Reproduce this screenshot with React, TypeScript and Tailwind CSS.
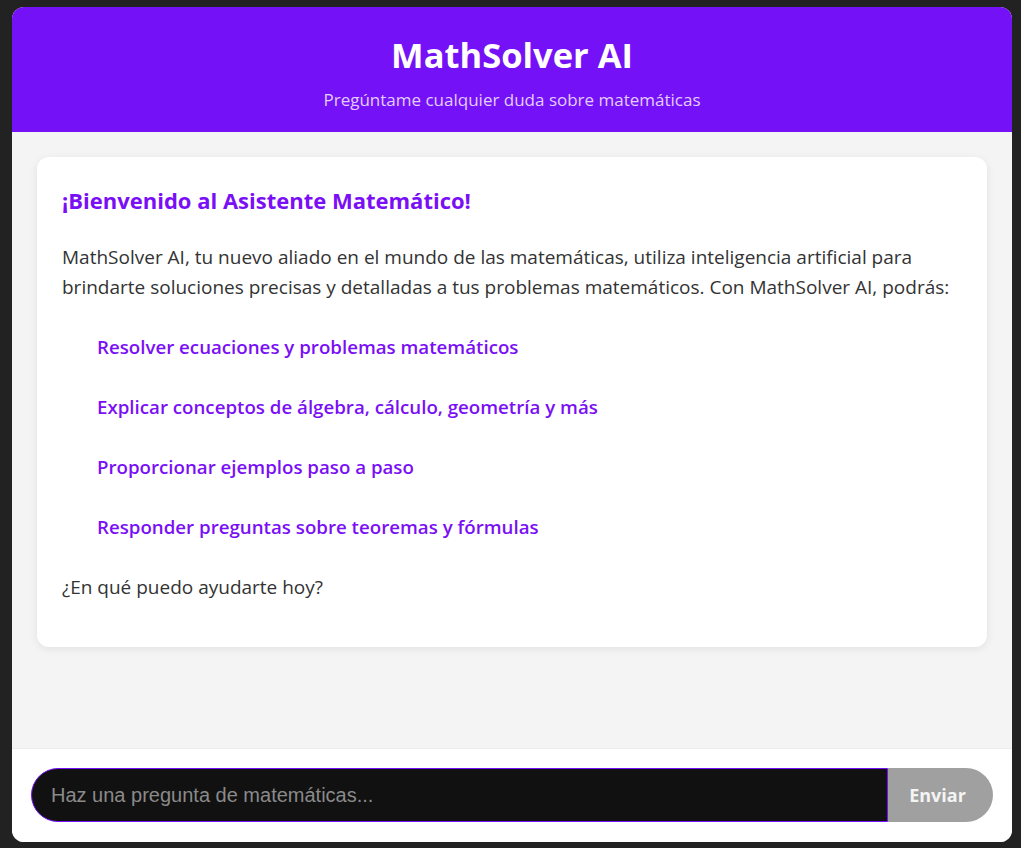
const features = [
  "Resolver ecuaciones y problemas matemáticos",
  "Explicar conceptos de álgebra, cálculo, geometría y más",
  "Proporcionar ejemplos paso a paso",
  "Responder preguntas sobre teoremas y fórmulas",
];

export default function App() {
  return (
    <div className="min-h-screen bg-[#222222] pt-[7px] pl-[12px] font-['Segoe_UI','Open_Sans',sans-serif]">
      <div className="w-[1000px] h-[835px] bg-white rounded-[12px] overflow-hidden flex flex-col">
        {/* Header */}
        <header className="bg-[#7511f6] text-center h-[125px] pt-[24px]">
          <h1 className="text-[34.5px] leading-[48px] font-bold text-white">MathSolver AI</h1>
          <p className="mt-[10px] text-[17px] leading-[22px] text-[#e2cdff]">
            Pregúntame cualquier duda sobre matemáticas
          </p>
        </header>

        {/* Chat area */}
        <main className="flex-1 bg-[#f4f4f4] px-[25px] pt-[25px]">
          <div className="bg-white rounded-[12px] shadow-[0_2px_8px_rgba(0,0,0,0.08)] px-[25px] pt-[28px] pb-[45px] text-[#333333]">
            <h2 className="text-[22px] leading-[30px] font-bold text-[#7a0ff6]">
              ¡Bienvenido al Asistente Matemático!
            </h2>
            <p className="mt-[27px] text-[19px] leading-[30px]">
              MathSolver AI, tu nuevo aliado en el mundo de las matemáticas, utiliza inteligencia artificial para
              brindarte soluciones precisas y detalladas a tus problemas matemáticos. Con MathSolver AI, podrás:
            </p>
            <ul className="mt-[30px] pl-[35px] flex flex-col gap-[30px]">
              {features.map((f) => (
                <li key={f} className="text-[18.7px] leading-[30px] font-semibold text-[#7a0ff6]">
                  {f}
                </li>
              ))}
            </ul>
            <p className="mt-[30px] text-[19px] leading-[30px]">¿En qué puedo ayudarte hoy?</p>
          </div>
        </main>

        {/* Input bar */}
        <footer className="h-[94px] bg-white border-t border-[#ececec] px-[19px] pt-[19px]">
          <div className="flex h-[54px]">
            <input
              type="text"
              placeholder="Haz una pregunta de matemáticas..."
              className="flex-1 bg-[#111111] border border-[#7511f6] rounded-l-full px-[19px] text-[20px] text-white placeholder:text-[#8a8a8a] font-['Liberation_Sans',Arial,sans-serif] outline-none"
            />
            <button className="w-[105px] bg-[#a0a0a0] rounded-r-full text-[18px] font-bold text-[#f4f4f4] pr-[6px]">
              Enviar
            </button>
          </div>
        </footer>
      </div>
    </div>
  );
}
